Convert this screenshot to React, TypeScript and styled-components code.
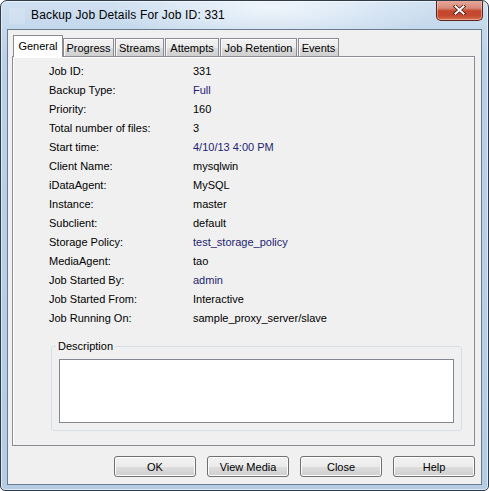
import React from "react";
import styled, { createGlobalStyle } from "styled-components";

const Global = createGlobalStyle`
  html, body { margin: 0; padding: 0; background: #ffffff; }
  body { font-family: "Liberation Sans", Arial, sans-serif; }
  * { box-sizing: border-box; }
`;

const Window = styled.div`
  width: 489px;
  height: 491px;
  border: 1px solid #2f3b48;
  border-radius: 7px 7px 5px 5px;
  background:
    radial-gradient(ellipse 170px 40px at 270px 6px, rgba(242, 248, 253, 0.9), rgba(242, 248, 253, 0) 100%),
    linear-gradient(to bottom, #cfe0f1 0px, #c4d8ec 28px, #bbd1e8 60px, #b5cce5 100%);
  display: flex;
  flex-direction: column;
  padding: 0 6px 6px 6px;
  overflow: hidden;
  box-shadow: inset 0 0 0 1px rgba(255, 255, 255, 0.55);
`;

const TitleBar = styled.div`
  height: 28px;
  display: flex;
  align-items: flex-start;
  flex-shrink: 0;
`;

const AppIcon = styled.div`
  width: 16px;
  height: 16px;
  margin: 7px 6px 0 2px;
  background: rgba(225, 236, 247, 0.35);
`;

const Title = styled.div`
  font-family: "Liberation Sans", Arial, sans-serif;
  font-size: 12px;
  color: #000;
  line-height: 16px;
  margin-top: 6px;
  letter-spacing: 0.15px;
`;

const CloseButton = styled.div`
  margin-left: auto;
  margin-right: -1px;
  margin-top: -1px;
  width: 47px;
  height: 21px;
  border: 1px solid #5c2319;
  border-top: none;
  border-radius: 0 0 5px 5px;
  background: linear-gradient(to bottom, #e8ab9e 0%, #d88a79 40%, #c4462e 55%, #c54a30 80%, #d77450 100%);
  box-shadow: inset 0 0 0 1px rgba(255, 220, 210, 0.45);
  display: flex;
  align-items: center;
  justify-content: center;
`;

const Client = styled.div`
  flex: 1;
  background: #f0f0f0;
  border: 1px solid #6a7b8e;
  display: flex;
  flex-direction: column;
  padding: 5px 6px 7px 4px;
`;

const TabStrip = styled.div`
  display: flex;
  align-items: flex-end;
  height: 22px;
  position: relative;
  z-index: 1;
  margin-bottom: -1px;
`;

const Tab = styled.div<{ $active?: boolean; $w: number }>`
  width: ${(p) => p.$w}px;
  height: ${(p) => (p.$active ? 22 : 19)}px;
  margin-left: ${(p) => (p.$active ? 1 : 0)}px;
  margin-right: ${(p) => (p.$active ? 0 : 1)}px;
  border: 1px solid #898c95;
  border-bottom: ${(p) => (p.$active ? "none" : "1px solid #898c95")};
  background: ${(p) =>
    p.$active ? "#ffffff" : "linear-gradient(to bottom, #f2f2f2 0%, #ebebeb 50%, #dddddd 51%, #cfcfcf 100%)"};
  font-size: 11px;
  color: #000;
  display: flex;
  align-items: center;
  justify-content: center;
  padding-bottom: ${(p) => (p.$active ? 2 : 0)}px;
  box-shadow: ${(p) => (p.$active ? "none" : "inset 0 1px 0 #ffffff, inset 1px 0 0 #f7f7f7")};
`;

const Panel = styled.div`
  flex: 1;
  border: 1px solid #898c95;
  background: #f0f0f0;
  box-shadow: inset 1px 1px 0 #ffffff;
  display: flex;
  flex-direction: column;
  padding: 5px 12px 14px 36px;
`;

const Fields = styled.div`
  display: grid;
  grid-template-columns: 144px 1fr;
  grid-auto-rows: 19px;
`;

const Label = styled.div`
  font-size: 11px;
  color: #000;
  line-height: 19px;
  white-space: nowrap;
`;

const Value = styled.div<{ $blue?: boolean }>`
  font-size: 11px;
  color: ${(p) => (p.$blue ? "#1e1e72" : "#000")};
  line-height: 19px;
  white-space: nowrap;
`;

const Group = styled.fieldset`
  margin: 11px 0 0 2px;
  padding: 6px 7px 7px 7px;
  border: 1px solid #d5dfe5;
  border-radius: 3px;
  min-width: 0;
`;

const Legend = styled.legend`
  font-size: 11px;
  color: #000;
  padding: 0 2px;
  margin-left: -3px;
  line-height: 14px;
`;

const DescBox = styled.div`
  height: 64px;
  background: #ffffff;
  border: 1px solid #828790;
`;

const ButtonRow = styled.div`
  display: flex;
  justify-content: flex-end;
  gap: 11px;
  margin-top: 10px;
`;

const Button = styled.div`
  width: 82px;
  height: 21px;
  border: 1px solid #707070;
  border-radius: 3px;
  background: linear-gradient(to bottom, #f2f2f2 0%, #ebebeb 50%, #dddddd 51%, #cfcfcf 100%);
  box-shadow: inset 0 0 0 1px #fcfcfc;
  font-size: 11px;
  color: #000;
  display: flex;
  align-items: center;
  justify-content: center;
`;

const fields: { label: string; value: string; blue?: boolean }[] = [
  { label: "Job ID:", value: "331" },
  { label: "Backup Type:", value: "Full", blue: true },
  { label: "Priority:", value: "160" },
  { label: "Total number of files:", value: "3" },
  { label: "Start time:", value: "4/10/13 4:00 PM", blue: true },
  { label: "Client Name:", value: "mysqlwin" },
  { label: "iDataAgent:", value: "MySQL" },
  { label: "Instance:", value: "master" },
  { label: "Subclient:", value: "default" },
  { label: "Storage Policy:", value: "test_storage_policy", blue: true },
  { label: "MediaAgent:", value: "tao" },
  { label: "Job Started By:", value: "admin", blue: true },
  { label: "Job Started From:", value: "Interactive" },
  { label: "Job Running On:", value: "sample_proxy_server/slave" },
];

const tabs = [
  { name: "General", w: 50, active: true },
  { name: "Progress", w: 51 },
  { name: "Streams", w: 49 },
  { name: "Attempts", w: 54 },
  { name: "Job Retention", w: 77 },
  { name: "Events", w: 41 },
];

export default function App() {
  return (
    <>
      <Global />
      <Window>
        <TitleBar>
          <AppIcon />
          <Title>Backup Job Details For Job ID: 331</Title>
          <CloseButton>
            <svg width="13" height="10" viewBox="0 0 13 10">
              <path d="M2.5 1.5 L10.5 8.5 M10.5 1.5 L2.5 8.5" stroke="#4a1a12" strokeWidth="3.6" strokeLinecap="square" />
              <path d="M2.5 1.5 L10.5 8.5 M10.5 1.5 L2.5 8.5" stroke="#ffffff" strokeWidth="2" strokeLinecap="square" />
            </svg>
          </CloseButton>
        </TitleBar>
        <Client>
          <TabStrip>
            {tabs.map((t) => (
              <Tab key={t.name} $active={t.active} $w={t.w}>
                {t.name}
              </Tab>
            ))}
          </TabStrip>
          <Panel>
            <Fields>
              {fields.map((f) => (
                <React.Fragment key={f.label}>
                  <Label>{f.label}</Label>
                  <Value $blue={f.blue}>{f.value}</Value>
                </React.Fragment>
              ))}
            </Fields>
            <Group>
              <Legend>Description</Legend>
              <DescBox />
            </Group>
          </Panel>
          <ButtonRow>
            <Button>OK</Button>
            <Button>View Media</Button>
            <Button>Close</Button>
            <Button>Help</Button>
          </ButtonRow>
        </Client>
      </Window>
    </>
  );
}
